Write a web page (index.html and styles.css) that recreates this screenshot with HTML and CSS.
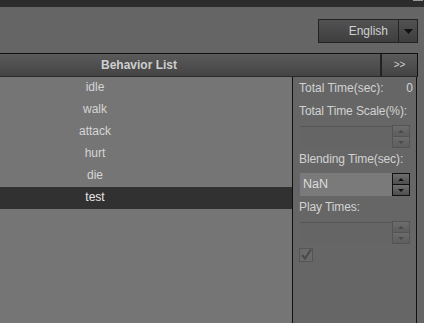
FILE: index.html
```html
<!DOCTYPE html>
<html>
<head>
<meta charset="utf-8">
<link rel="stylesheet" href="styles.css">
</head>
<body>
<div class="topbar"><span class="grip"></span></div>
<div class="toolbar">
  <div class="lang">
    <span class="lang-label">English</span>
    <span class="lang-arrow"><svg width="9" height="5" viewBox="0 0 9 5"><path d="M0 0h9L4.5 5z" fill="#111"/></svg></span>
  </div>
</div>
<div class="panel">
  <div class="header">
    <div class="title">Behavior List</div>
    <div class="more">&gt;&gt;</div>
  </div>
  <div class="body">
    <ul class="list">
      <li>idle</li>
      <li>walk</li>
      <li>attack</li>
      <li>hurt</li>
      <li>die</li>
      <li class="selected">test</li>
    </ul>
    <div class="props">
      <div class="row"><span>Total Time(sec):</span><span>0</span></div>
      <div class="label first">Total Time Scale(%):</div>
      <div class="field disabled">
        <div class="input"></div>
        <div class="spin"><span class="up"></span><span class="down"></span></div>
      </div>
      <div class="label">Blending Time(sec):</div>
      <div class="field">
        <div class="input">NaN</div>
        <div class="spin"><span class="up"></span><span class="down"></span></div>
      </div>
      <div class="label">Play Times:</div>
      <div class="field disabled">
        <div class="input"></div>
        <div class="spin"><span class="up"></span><span class="down"></span></div>
      </div>
      <div class="check">
        <svg width="14" height="14" viewBox="0 0 14 14"><rect x="0.5" y="0.5" width="13" height="13" fill="#6a6a6a" stroke="#555"/><path d="M3 7l3 3.5 6-9" fill="none" stroke="#4a4a4a" stroke-width="2"/></svg>
      </div>
    </div>
  </div>
</div>
</body>
</html>
```

FILE: styles.css
```css
html, body {
  margin: 0;
  padding: 0;
  height: 100%;
  overflow: hidden;
}
body {
  background: #656565;
  font-family: "Liberation Sans", Arial, sans-serif;
  font-size: 12px;
  color: #d2d2d2;
}
.topbar {
  height: 7px;
  background: #2c2c2c;
  display: flex;
  justify-content: flex-end;
}
.grip {
  width: 10px;
  height: 2px;
  margin-right: 1px;
  border-top: 1px solid #9a9a9a;
}
.toolbar {
  display: flex;
  justify-content: flex-end;
  padding: 12px 6px 0 0;
  height: 46px;
  box-sizing: border-box;
}
.lang {
  width: 100px;
  height: 24px;
  box-sizing: border-box;
  border: 1px solid #232323;
  background: linear-gradient(#525252, #3e3e3e);
  display: flex;
}
.lang-label {
  flex: 1;
  line-height: 22px;
  text-align: right;
  padding-right: 10px;
  color: #d0d0d0;
}
.lang-arrow {
  width: 18px;
  border-left: 1px solid #232323;
  display: flex;
  align-items: center;
  justify-content: center;
}
.panel {
  margin-left: -102px;
  width: 520px;
  height: 270px;
  border-top: 1px solid #111;
}
.header {
  height: 23px;
  display: flex;
  background: linear-gradient(#5a5a5a, #444);
  border-bottom: 1px solid #2a2a2a;
  box-sizing: border-box;
  border-right: 1px solid #111;
}
.title {
  flex: 1;
  text-align: center;
  line-height: 22px;
  font-weight: bold;
  color: #cfcfcf;
  border-right: 2px solid #222;
}
.more {
  width: 35px;
  text-align: center;
  line-height: 22px;
  font-size: 10px;
  color: #cfcfcf;
}
.body {
  display: flex;
  height: 260px;
}
.list {
  list-style: none;
  margin: 0;
  padding: 0;
  width: 394px;
  background: #757575;
  border-right: 1px solid #111;
}
.list li {
  height: 22px;
  line-height: 21px;
  text-align: center;
  color: #d6d6d6;
}
.list li.selected {
  background: #313131;
  color: #e8e8e8;
}
.props {
  width: 124px;
  border-right: 1px solid #111;
  padding: 4px 5px 0 6px;
  box-sizing: border-box;
  background: #666;
  white-space: nowrap;
}
.row {
  display: flex;
  justify-content: space-between;
  line-height: 14px;
  margin-right: -2px;
}
.label {
  line-height: 14px;
  margin-top: 4px;
  letter-spacing: -0.1px;
}
.label.first { margin-top: 9px; }
.field {
  display: flex;
  height: 23px;
  margin: 7px 1px 0 1px;
}
.field .input {
  flex: 1;
  background: #7a7a7a;
  color: #dcdcdc;
  line-height: 22px;
  padding-left: 3px;
  font-size: 12.5px;
}
.field.disabled .input {
  background: #656565;
  border-top: 1px solid #555;
  margin-top: 1px;
}
.spin {
  width: 18px;
  display: flex;
  flex-direction: column;
}
.spin span {
  flex: 1;
  border: 1px solid #111;
  background: linear-gradient(#6e6e6e, #4e4e4e);
  position: relative;
}
.spin span + span { border-top: none; }
.spin span::after {
  content: "";
  position: absolute;
  left: 5px;
  top: 4px;
  border-left: 3.5px solid transparent;
  border-right: 3.5px solid transparent;
}
.spin .up::after { border-bottom: 3.5px solid #111; }
.spin .down::after { border-top: 3.5px solid #111; }
.field.disabled .spin span {
  border-color: #545454;
  background: linear-gradient(#6c6c6c, #5e5e5e);
}
.field.disabled .spin .up::after { border-bottom-color: #4a4a4a; }
.field.disabled .spin .down::after { border-top-color: #4a4a4a; }
.check {
  margin-top: 4px;
  height: 14px;
}
.check svg { display: block; }
```
